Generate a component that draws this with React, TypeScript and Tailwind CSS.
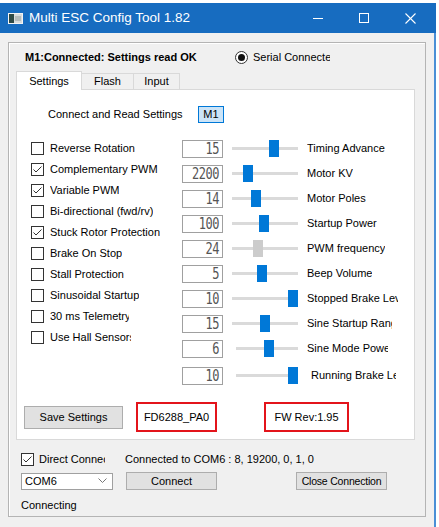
import React from "react";

const checks: [string, boolean, number?][] = [
  ["Reverse Rotation", false],
  ["Complementary PWM", true],
  ["Variable PWM", true],
  ["Bi-directional (fwd/rv)", false],
  ["Stuck Rotor Protection", true],
  ["Brake On Stop", false],
  ["Stall Protection", false],
  ["Sinusoidal Startup", false],
  ["30 ms Telemetry", false, 79],
  ["Use Hall Sensors", false, 81],
];

type Row = {
  v: string;
  label: string;
  pos: number;
  gray?: boolean;
  inset?: boolean;
  labelInset?: boolean;
  lw?: number;
  extraTop?: boolean;
};

const rows: Row[] = [
  { v: "15", label: "Timing Advance", pos: 37 },
  { v: "2200", label: "Motor KV", pos: 11 },
  { v: "14", label: "Motor Poles", pos: 19 },
  { v: "100", label: "Startup Power", pos: 27 },
  { v: "24", label: "PWM frequency", pos: 21, gray: true },
  { v: "5", label: "Beep Volume", pos: 25 },
  { v: "10", label: "Stopped Brake Level", pos: 56, lw: 91 },
  { v: "15", label: "Sine Startup Range", pos: 28, lw: 85 },
  { v: "6", label: "Sine Mode Power", pos: 28, inset: true, lw: 81 },
  { v: "10", label: "Running Brake Level", pos: 52, inset: true, labelInset: true, lw: 85, extraTop: true },
];

function CheckBox({ checked }: { checked: boolean }) {
  return (
    <div className="w-[13px] h-[13px] border border-[#333333] bg-white shrink-0 flex items-center justify-center">
      {checked && (
        <svg width="11" height="11" viewBox="0 0 11 11">
          <polyline points="1.5,5.5 4,8 9.5,2.5" fill="none" stroke="#333333" strokeWidth="1" />
        </svg>
      )}
    </div>
  );
}

export default function App() {
  return (
    <div className="w-[439px] h-[527px] bg-white overflow-hidden font-['Liberation_Sans',Arial,sans-serif] text-[11px] text-black leading-none">
      <div className="w-[436px] h-[524px] mt-[3px] flex flex-col">
        {/* Title bar */}
        <div className="h-[30px] bg-[#176cc0] flex items-center text-white shrink-0">
          <div className="ml-[8px] w-[15px] h-[11px] shrink-0">
            <svg width="15" height="11" viewBox="0 0 15 11">
              <rect x="0.5" y="0.5" width="14" height="10" fill="#d9dcdc" stroke="#f4f4f4" />
              <rect x="1" y="1" width="5" height="9" fill="#2f4a46" />
              <rect x="7" y="3" width="6" height="5" fill="#b5bcbc" />
            </svg>
          </div>
          <div className="ml-[6px] text-[13.5px] leading-none whitespace-nowrap">Multi ESC Config Tool 1.82</div>
          <div className="flex-1" />
          <div className="w-[46px] h-full flex items-center justify-center">
            <div className="w-[10px] h-px bg-white" />
          </div>
          <div className="w-[46px] h-full flex items-center justify-center">
            <div className="w-[10px] h-[10px] border border-white" />
          </div>
          <div className="w-[46px] h-full flex items-center justify-center">
            <svg width="11" height="11" viewBox="0 0 11 11">
              <line x1="0.5" y1="0.5" x2="10.5" y2="10.5" stroke="white" strokeWidth="1.1" />
              <line x1="10.5" y1="0.5" x2="0.5" y2="10.5" stroke="white" strokeWidth="1.1" />
            </svg>
          </div>
          <div className="w-[3px]" />
        </div>

        {/* Body */}
        <div className="flex-1 bg-[#f0f0f0] border-r-2 border-[#4a8fd6] pt-[9px] pl-[8px]">
          <div className="w-[418px] h-[475px] border border-[#b4b4b4] shadow-[inset_1px_1px_0_#ffffff] flex flex-col">
            {/* Header */}
            <div className="h-[28px] flex items-center shrink-0">
              <div className="ml-[16px] w-[210px] font-bold whitespace-nowrap">M1:Connected: Settings read OK</div>
              <div className="w-[13px] h-[13px] rounded-full border border-[#333333] bg-white flex items-center justify-center shrink-0">
                <div className="w-[7px] h-[7px] rounded-full bg-[#111111]" />
              </div>
              <div className="ml-[5px] w-[77px] overflow-hidden whitespace-nowrap">Serial Connected</div>
            </div>

            {/* Tabs */}
            <div className="h-[18px] ml-[7px] flex items-end shrink-0 relative z-10">
              <div className="w-[66px] h-[19px] -mb-px bg-white border border-b-0 border-[#d9d9d9] flex items-center justify-center">
                Settings
              </div>
              <div className="w-[52px] h-[16px] bg-[#f0f0f0] border border-l-0 border-b-0 border-[#d9d9d9] flex items-center justify-center">
                Flash
              </div>
              <div className="w-[46px] h-[16px] bg-[#f0f0f0] border border-l-0 border-b-0 border-[#d9d9d9] flex items-center justify-center">
                Input
              </div>
            </div>

            {/* Tab panel */}
            <div className="ml-[7px] w-[399px] h-[351px] bg-white border border-[#d9d9d9] flex flex-col shrink-0">
              <div className="mt-[16px] h-[17px] pl-[31px] flex items-center">
                <div className="w-[150px] whitespace-nowrap">Connect and Read Settings</div>
                <div className="w-[26px] h-[17px] bg-[#cce4f7] border border-[#0078d7] flex items-center justify-center">
                  M1
                </div>
              </div>

              <div className="mt-[13px] flex">
                <div className="w-[165px] pl-[14px] pt-[2px] flex flex-col">
                  {checks.map(([label, checked, w]) => (
                    <div key={label} className="h-[21px] flex items-center">
                      <CheckBox checked={checked} />
                      <div
                        className="ml-[6px] whitespace-nowrap overflow-hidden"
                        style={w ? { width: w } : undefined}
                      >
                        {label}
                      </div>
                    </div>
                  ))}
                </div>

                <div className="flex flex-col">
                  {rows.map((r) => (
                    <div key={r.label} className={`h-[25px] flex items-center ${r.extraTop ? "mt-[2px]" : ""}`}>
                      <div className="w-[41px] h-[18px] border border-[#a0a0a0] bg-white flex items-center justify-end pr-[3px] font-['DejaVu_Sans_Mono',monospace] text-[12px] text-[#555555]">
                        <span className="inline-block scale-y-125 tracking-[-0.5px]">{r.v}</span>
                      </div>
                      <div className={`${r.inset ? "ml-[13px] w-[62px]" : "ml-[9px] w-[66px]"} h-[17px] relative flex items-center`}>
                        <div className="w-full h-[3px] bg-[#dadada]" />
                        <div
                          className={`absolute top-0 w-[10px] h-[17px] ${r.gray ? "bg-[#cccccc]" : "bg-[#0078d7]"}`}
                          style={{ left: r.pos }}
                        />
                      </div>
                      <div
                        className={`${r.labelInset ? "ml-[13px]" : "ml-[9px]"} whitespace-nowrap overflow-hidden`}
                        style={r.lw ? { width: r.lw } : undefined}
                      >
                        {r.label}
                      </div>
                    </div>
                  ))}
                </div>
              </div>

              <div className="mt-auto mb-[7px] h-[30px] pl-[7px] flex items-center">
                <div className="w-[99px] h-[23px] bg-[#e1e1e1] border border-[#adadad] flex items-center justify-center">
                  Save Settings
                </div>
                <div className="ml-[13px] w-[81px] h-[30px] border-2 border-[#e3141b] flex items-center justify-center">
                  FD6288_PA0
                </div>
                <div className="ml-[47px] w-[85px] h-[30px] border-2 border-[#e3141b] flex items-center justify-center">
                  FW Rev:1.95
                </div>
              </div>
            </div>

            {/* Bottom controls */}
            <div className="mt-[11px] h-[16px] pl-[12px] flex items-center">
              <CheckBox checked={true} />
              <div className="ml-[5px] w-[66px] overflow-hidden whitespace-nowrap">Direct Connection</div>
              <div className="ml-[20px] whitespace-nowrap">Connected to COM6 : 8, 19200, 0, 1, 0</div>
            </div>
            <div className="mt-[5px] h-[18px] pl-[12px] flex items-center">
              <div className="w-[92px] h-[17px] bg-white border border-[#a0a0a0] flex items-center justify-between pl-[3px] pr-[5px]">
                <span>COM6</span>
                <svg width="9" height="6" viewBox="0 0 9 6">
                  <polyline points="0.5,0.5 4.5,4.5 8.5,0.5" fill="none" stroke="#777777" strokeWidth="1" />
                </svg>
              </div>
              <div className="ml-[13px] w-[91px] h-[18px] bg-[#e1e1e1] border border-[#adadad] flex items-center justify-center">
                Connect
              </div>
              <div className="ml-[79px] w-[91px] h-[18px] bg-[#e1e1e1] border border-[#adadad] flex items-center justify-center text-[10.5px] tracking-[-0.2px]">
                Close Connection
              </div>
            </div>
            <div className="mt-[7px] h-[16px] pl-[12px] flex items-center">Connecting</div>
          </div>
        </div>
      </div>
    </div>
  );
}
